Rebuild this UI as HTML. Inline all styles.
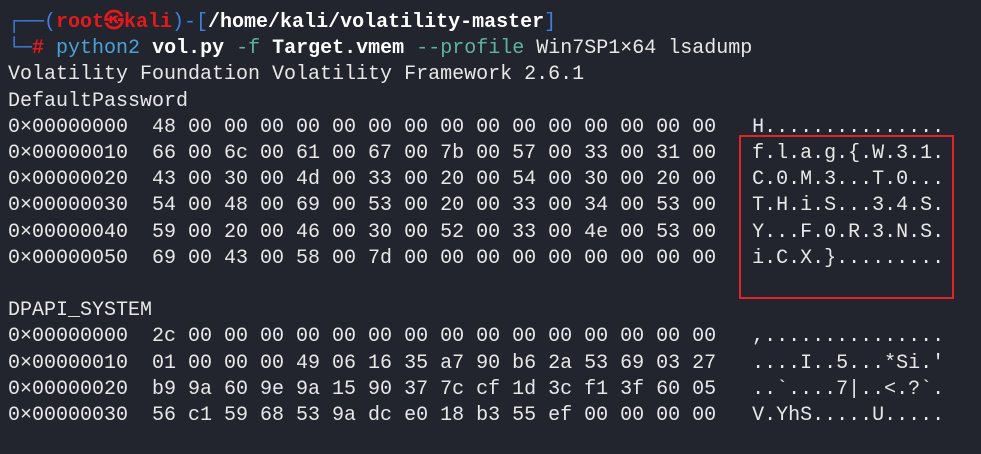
<!DOCTYPE html>
<html><head><meta charset="utf-8"><style>
html,body{margin:0;padding:0;background:#23252e;width:981px;height:454px;overflow:hidden}
pre{margin:0;position:absolute;left:8px;top:10px;font-family:"Liberation Mono","DejaVu Sans Mono",monospace;font-size:20px;line-height:26.2px;color:#e8e8e8;white-space:pre}
.b{color:#3f7fe0}.r{color:#e3191c;font-weight:bold}.w{color:#fff;font-weight:bold}.c{color:#4aa3d8}.t{color:#5fb3a3}
.box{position:absolute;left:739px;top:135px;width:211px;height:160px;border:2px solid #e02427}
</style></head><body>
<pre><span class="b">┌──(</span><span class="r">root㉿kali</span><span class="b">)-[</span><span class="w">/home/kali/volatility-master</span><span class="b">]</span>
<span class="b">└─</span><span class="r">#</span> <span class="c">python2</span> <span class="w">vol.py</span> <span class="t">-f</span> <span class="w">Target.vmem</span> <span class="t">--profile</span> Win7SP1×64 lsadump
Volatility Foundation Volatility Framework 2.6.1
DefaultPassword
0×00000000  48 00 00 00 00 00 00 00 00 00 00 00 00 00 00 00   H...............
0×00000010  66 00 6c 00 61 00 67 00 7b 00 57 00 33 00 31 00   f.l.a.g.{.W.3.1.
0×00000020  43 00 30 00 4d 00 33 00 20 00 54 00 30 00 20 00   C.0.M.3...T.0...
0×00000030  54 00 48 00 69 00 53 00 20 00 33 00 34 00 53 00   T.H.i.S...3.4.S.
0×00000040  59 00 20 00 46 00 30 00 52 00 33 00 4e 00 53 00   Y...F.0.R.3.N.S.
0×00000050  69 00 43 00 58 00 7d 00 00 00 00 00 00 00 00 00   i.C.X.}.........

DPAPI_SYSTEM
0×00000000  2c 00 00 00 00 00 00 00 00 00 00 00 00 00 00 00   ,...............
0×00000010  01 00 00 00 49 06 16 35 a7 90 b6 2a 53 69 03 27   ....I..5...*Si.'
0×00000020  b9 9a 60 9e 9a 15 90 37 7c cf 1d 3c f1 3f 60 05   ..`....7|..&lt;.?`.
0×00000030  56 c1 59 68 53 9a dc e0 18 b3 55 ef 00 00 00 00   V.YhS.....U.....</pre>
<div class="box"></div>
</body></html>
